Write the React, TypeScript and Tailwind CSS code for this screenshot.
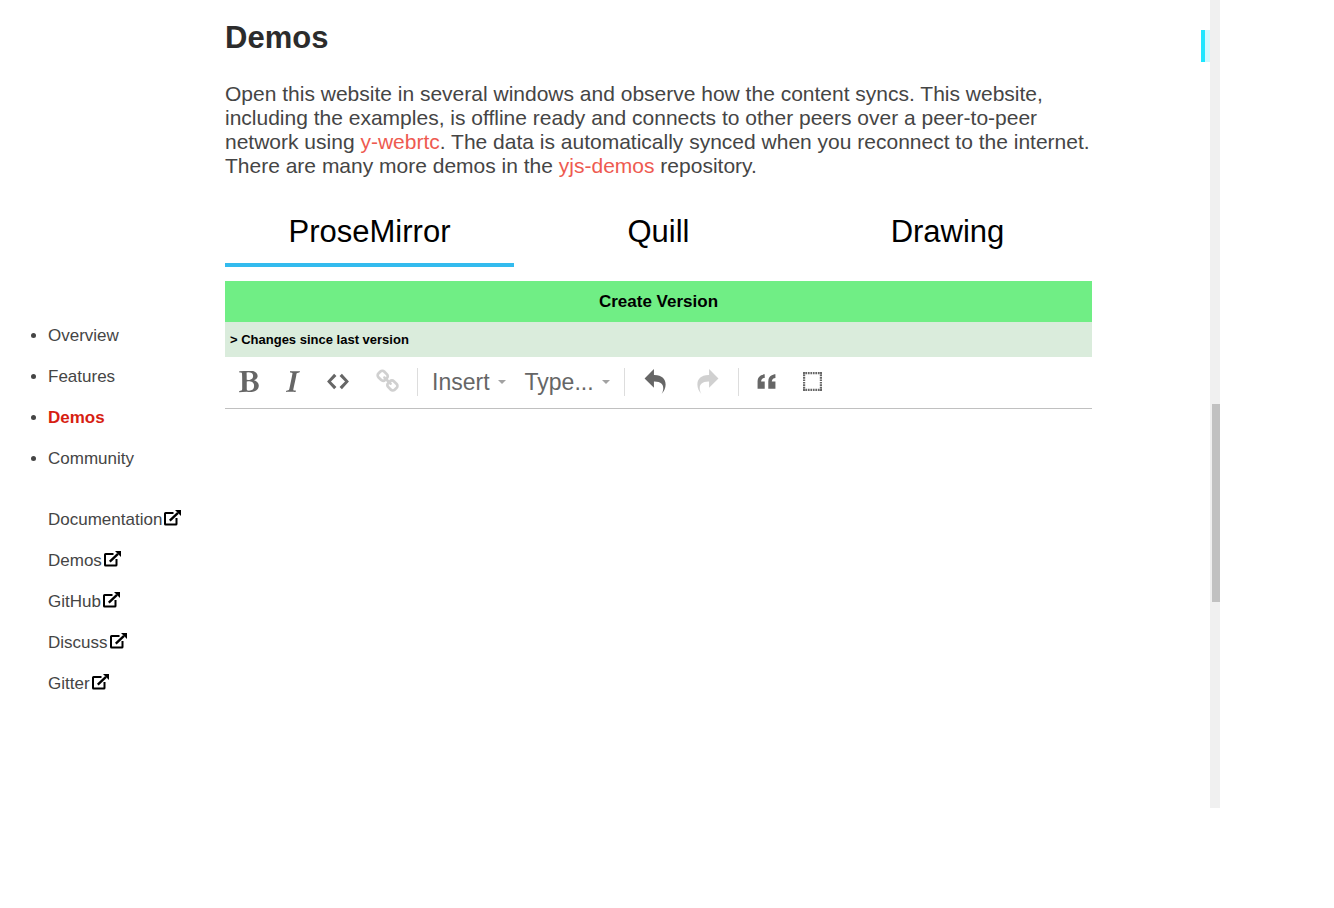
import React, { useState } from "react";

const sections = ["Overview", "Features", "Demos", "Community"];
const externals = ["Documentation", "Demos", "GitHub", "Discuss", "Gitter"];
const tabs = ["ProseMirror", "Quill", "Drawing"];

const icons = {
  strong: {
    box: "0 0 805 1024",
    width: "w-5",
    d: "M317 869q42 18 80 18 214 0 214-191 0-65-23-102-15-25-35-42t-38-26-46-14-48-6-54-1q-41 0-57 5 0 30-0 90t-0 90q0 4-0 38t-0 55 2 47 6 38zM309 442q24 4 62 4 46 0 81-7t62-25 42-51 14-81q0-40-16-70t-45-46-61-24-70-8q-28 0-74 7 0 28 2 86t2 86q0 15-0 45t-0 45q0 26 0 39zM0 950l1-53q8-2 48-9t60-15q4-6 7-15t4-19 3-18 1-21 0-19v-37q0-561-12-585-2-4-12-8t-25-6-28-4-27-2-17-1l-2-47q56-1 194-6t213-5q13 0 39 0t38 0q40 0 78 7t73 24 61 40 42 59 16 78q0 29-9 54t-22 41-36 32-41 25-48 22q88 20 146 76t58 141q0 57-20 102t-53 74-78 48-93 27-100 8q-25 0-75-1t-75-1q-60 0-175 6t-132 6z",
  },
  em: {
    box: "0 0 585 1024",
    width: "w-[14px]",
    d: "M0 949l9-48q3-1 46-12t63-21q16-20 23-57 0-4 35-165t65-310 29-169v-14q-13-7-31-10t-39-4-33-3l10-58q18 1 68 3t85 4 68 1q27 0 56-1t69-4 56-3q-2 22-10 50-17 5-58 16t-62 19q-4 10-8 24t-5 22-4 26-3 24q-15 84-50 239t-44 203q-1 5-7 33t-11 51-9 47-3 32l0 10q9 2 105 17-1 25-9 56-6 0-18 0t-18 0q-16 0-49-5t-49-5q-78-1-117-1-29 0-81 5t-69 6z",
  },
  code: {
    box: "0 0 896 1024",
    width: "w-[22px]",
    d: "M608 192l-96 96 224 224-224 224 96 96 288-320-288-320zM288 192l-288 320 288 320 96-96-224-224 224-224-96-96z",
  },
  link: {
    box: "0 0 951 1024",
    width: "w-[23px]",
    d: "M832 694q0-22-16-38l-118-118q-16-16-38-16-24 0-41 18 1 1 10 10t12 12 8 10 7 14 2 15q0 22-16 38t-38 16q-8 0-15-2t-14-7-10-8-12-12-10-10q-18 17-18 41 0 22 16 38l117 118q15 15 38 15 22 0 38-14l84-83q16-16 16-38zM430 292q0-22-16-38l-117-118q-16-16-38-16-22 0-38 15l-84 83q-16 16-16 37 0 22 16 38l118 118q15 15 38 15 24 0 41-17-1-1-10-10t-12-12-8-10-7-14-2-15q0-22 16-38t38-16q8 0 15 2t14 7 10 8 12 12 10 10q18-17 18-41zM941 694q0 68-48 116l-84 83q-47 47-116 47-69 0-116-48l-117-118q-47-47-47-116 0-70 50-119l-50-50q-49 50-118 50-68 0-116-48l-118-118q-48-48-48-116t48-116l84-83q47-47 116-47 69 0 116 48l117 118q47 47 47 116 0 70-50 119l50 50q49-50 118-50 68 0 116 48l118 118q48 48 48 116z",
  },
  undo: {
    box: "0 0 1024 1024",
    width: "w-[25px]",
    d: "M761 1024c113-206 132-520-313-509v253l-384-384 384-384v248c534-13 594 472 313 775z",
  },
  redo: {
    box: "0 0 1024 1024",
    width: "w-[25px]",
    d: "M576 248v-248l384 384-384 384v-253c-446-10-427 303-313 509-280-303-221-789 313-775z",
  },
  quote: {
    box: "0 0 640 896",
    width: "w-[19px]",
    d: "M0 448v256h256v-256h-128c0 0 0-128 128-128v-128c0 0-256 0-256 256zM640 320v-128c0 0-256 0-256 256v256h256v-256h-128c0 0 0-128 128-128z",
  },
};

function Tool({ name, label, disabled }: { name: keyof typeof icons; label: string; disabled?: boolean }) {
  const icon = icons[name];
  return (
    <button type="button" aria-label={label} disabled={disabled} className="disabled:opacity-30">
      <svg viewBox={icon.box} className={`h-[25px] fill-current ${icon.width}`}>
        <path d={icon.d} />
      </svg>
    </button>
  );
}

function Dropdown({ label }: { label: string }) {
  return (
    <button type="button" aria-haspopup="menu" className="flex items-center gap-2 text-[23px] leading-6">
      {label}
      <svg viewBox="0 0 8 4" className="h-1 w-2 fill-current opacity-60">
        <path d="M0 0h8L4 4z" />
      </svg>
    </button>
  );
}

function Separator() {
  return <span className="h-7 w-px bg-[#dddddd]" />;
}

function ExternalIcon() {
  return (
    <svg viewBox="0 0 17 16" className="mb-1 h-4 w-[17px]" fill="none" stroke="#000">
      <path d="M9.5 3H1.6a.6.6 0 0 0-.6.6v10.3c0 .3.3.6.6.6h10.3c.3 0 .6-.3.6-.6V8" strokeWidth="2" />
      <path d="M5.8 10.6 14 2.8" strokeWidth="2.4" />
      <path d="M11 0h6v6z" fill="#000" stroke="none" />
    </svg>
  );
}

export default function App() {
  const [tab, setTab] = useState("ProseMirror");
  return (
    <div className="flex h-screen bg-white pr-[114px] pb-[100px] font-['Liberation_Sans',Arial,sans-serif] text-[#454545]">
      <nav aria-label="Sections" className="w-[225px] shrink-0 pt-[326px] pl-12 text-[17px] leading-5">
        <ul className="flex list-disc flex-col gap-[21px]">
          {sections.map((s) => (
            <li key={s}>
              <a href={"#" + s.toLowerCase()} className={s === "Demos" ? "font-bold text-[#d71e12]" : ""}>
                {s}
              </a>
            </li>
          ))}
        </ul>
        <ul className="mt-[41px] flex flex-col gap-[21px]">
          {externals.map((s) => (
            <li key={s}>
              <a href={"#" + s.toLowerCase() + "-site"} className="flex h-5 items-center gap-[2px]">
                {s}
                <ExternalIcon />
              </a>
            </li>
          ))}
        </ul>
      </nav>

      <main className="min-w-0 flex-1 pt-5">
        <h1 className="text-[31px] leading-9 font-bold text-[#2c2c2c]">Demos</h1>
        <p className="mt-[26px] text-[21px] leading-6">
          Open this website in several windows and observe how the content syncs. This website, including the
          examples, is offline ready and connects to other peers over a peer-to-peer network using{" "}
          <a href="#y-webrtc" className="text-[#ee5a50]">y-webrtc</a>. The data is automatically synced when you
          reconnect to the internet. There are many more demos in the{" "}
          <a href="#yjs-demos" className="text-[#ee5a50]">yjs-demos</a> repository.
        </p>

        <div role="tablist" className="mt-5 grid grid-cols-3 text-[31px] text-black">
          {tabs.map((t) => (
            <button
              key={t}
              type="button"
              role="tab"
              aria-selected={t === tab}
              onClick={() => setTab(t)}
              className={`h-[69px] border-b-4 pt-[2px] leading-9 ${t === tab ? "border-[#33bbee]" : "border-transparent"}`}
            >
              {t}
            </button>
          ))}
        </div>

        <button type="button" className="mt-[14px] block h-[41px] w-full bg-[#70ee85] text-[17px] font-bold text-black">
          Create Version
        </button>
        <button type="button" className="block h-[35px] w-full bg-[#daecdc] px-[5px] text-left text-[13px] font-bold text-black">
          &gt; Changes since last version
        </button>

        <div role="toolbar" aria-label="Formatting" className="flex h-[52px] items-center border-b border-[#c0c0c0] pb-[2px] pl-[14px] text-[#666666]">
          <div className="flex items-center gap-[27px] pr-[18px]">
            <Tool name="strong" label="Bold" />
            <Tool name="em" label="Italic" />
            <Tool name="code" label="Code" />
            <Tool name="link" label="Link" disabled />
          </div>
          <Separator />
          <div className="flex items-center gap-[19px] pr-[14px] pl-[14px]">
            <Dropdown label="Insert" />
            <Dropdown label="Type..." />
          </div>
          <Separator />
          <div className="flex items-center gap-[27px] pr-[18px] pl-[18px]">
            <Tool name="undo" label="Undo" />
            <Tool name="redo" label="Redo" disabled />
          </div>
          <Separator />
          <div className="flex items-center gap-[27px] pl-[18px]">
            <Tool name="quote" label="Block quote" />
            <button type="button" aria-label="Select parent node">
              <svg viewBox="0 0 19 19" className="size-[19px]" fill="none" stroke="currentColor" strokeWidth="2.2">
                <path d="M0 1.1h19M0 17.9h19M1.1 0v19M17.9 0v19" strokeDasharray="1.7 0.77" />
              </svg>
            </button>
          </div>
        </div>
      </main>

      <div className="relative w-[118px] shrink-0">
        <div className="absolute top-[30px] right-0 h-8 w-[9px] border-l-4 border-[#1ce6ff] bg-[#cff8fe]" />
      </div>
      <div className="flex w-[10px] shrink-0 flex-col items-end bg-[#f0f0f0]">
        <div className="basis-1/2" />
        <div className="h-[198px] w-2 bg-[#c1c1c1]" />
      </div>
    </div>
  );
}
